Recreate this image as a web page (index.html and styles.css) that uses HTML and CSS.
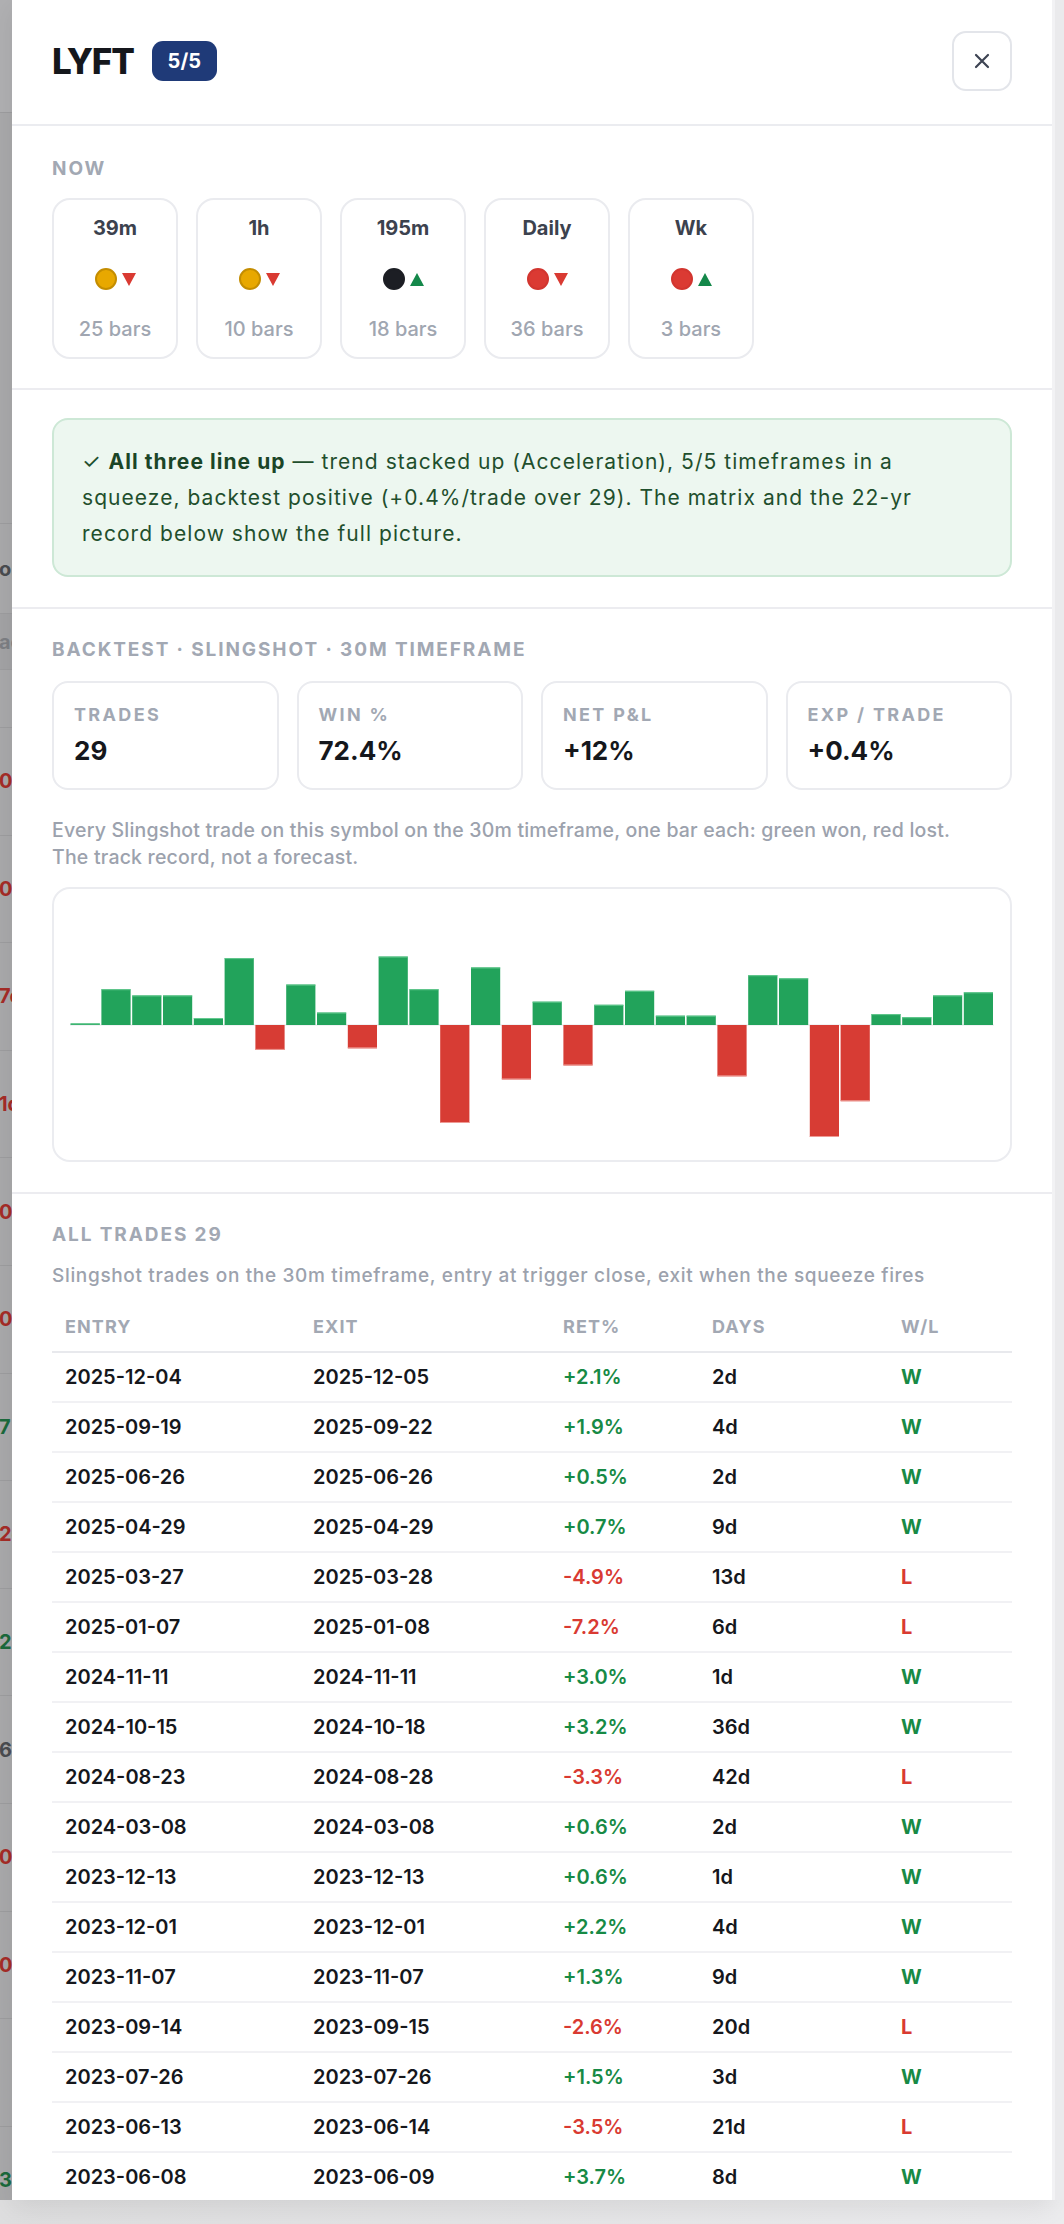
FILE: index.html
```html
<!DOCTYPE html>
<html lang="en">
<head>
  <meta charset="UTF-8" />
  <title>LYFT · Slingshot</title>
  <meta name="viewport" content="width=device-width, initial-scale=1.0" />
  <link rel="stylesheet" href="styles.css">
</head>
<body>
  <div class="screen">
    <!-- dimmed list page behind the modal -->
    <div class="backdrop">
      <div class="bd-top"></div>
      <div class="bd-gap"></div>
      <div class="bd-a"><span class="bd-dark">or</span></div>
      <div class="bd-b"><span class="bd-grey">ac</span></div>
      <div class="bd-c"></div>
      <div class="bd-row"><span class="bd-red">0d</span></div>
      <div class="bd-row"><span class="bd-red">0d</span></div>
      <div class="bd-row"><span class="bd-red">7d</span></div>
      <div class="bd-row"><span class="bd-red">1d</span></div>
      <div class="bd-row"><span class="bd-red">0d</span></div>
      <div class="bd-row"><span class="bd-red">0d</span></div>
      <div class="bd-row"><span class="bd-green">7 </span></div>
      <div class="bd-row"><span class="bd-red">2d</span></div>
      <div class="bd-row"><span class="bd-green">2 </span></div>
      <div class="bd-row"><span class="bd-dark">6 </span></div>
      <div class="bd-row"><span class="bd-red">0d</span></div>
      <div class="bd-row"><span class="bd-red">0d</span></div>
      <div class="bd-row"></div>
      <div class="bd-row"><span class="bd-green">3 </span></div>
    </div>

    <div class="panel">
      <div class="head">
        <div class="title">
          <h1>LYFT</h1>
          <span class="badge">5/5</span>
        </div>
        <button class="close" aria-label="Close">
          <svg width="16" height="16" viewBox="0 0 16 16">
            <path d="M2 2 L14 14 M14 2 L2 14" stroke="#3d4453" stroke-width="2.2" stroke-linecap="round" fill="none" />
          </svg>
        </button>
      </div>

      <div class="section section-now">
        <div class="label">Now</div>
        <div class="tf-row">
          <div class="tf">
            <div class="tf-name">39m</div>
            <div class="tf-sig"><span class="dot amber"></span><span class="tri down"></span></div>
            <div class="tf-bars">25 bars</div>
          </div>
          <div class="tf">
            <div class="tf-name">1h</div>
            <div class="tf-sig"><span class="dot amber"></span><span class="tri down"></span></div>
            <div class="tf-bars">10 bars</div>
          </div>
          <div class="tf">
            <div class="tf-name">195m</div>
            <div class="tf-sig"><span class="dot black"></span><span class="tri up"></span></div>
            <div class="tf-bars">18 bars</div>
          </div>
          <div class="tf">
            <div class="tf-name">Daily</div>
            <div class="tf-sig"><span class="dot red"></span><span class="tri down"></span></div>
            <div class="tf-bars">36 bars</div>
          </div>
          <div class="tf">
            <div class="tf-name">Wk</div>
            <div class="tf-sig"><span class="dot red"></span><span class="tri up"></span></div>
            <div class="tf-bars">3 bars</div>
          </div>
        </div>
      </div>

      <div class="section">
        <div class="callout">
          <span class="tick">✓</span> <strong>All three line up</strong> — trend stacked up (Acceleration), 5/5 timeframes in a squeeze, backtest positive (+0.4%/trade over 29). The matrix and the 22-yr record below show the full picture.
        </div>
      </div>

      <div class="section">
        <div class="label">Backtest · Slingshot · 30m timeframe</div>
        <div class="stats">
          <div class="stat">
            <div class="stat-label">Trades</div>
            <div class="stat-value">29</div>
          </div>
          <div class="stat">
            <div class="stat-label">Win %</div>
            <div class="stat-value">72.4%</div>
          </div>
          <div class="stat">
            <div class="stat-label">Net P&amp;L</div>
            <div class="stat-value">+12%</div>
          </div>
          <div class="stat">
            <div class="stat-label">Exp / trade</div>
            <div class="stat-value">+0.4%</div>
          </div>
        </div>
        <p class="note">Every Slingshot trade on this symbol on the 30m timeframe, one bar each: green won, red lost.<br>The track record, not a forecast.</p>
        <div class="chart">
          <svg id="bars" viewBox="0 0 924 224" preserveAspectRatio="none"></svg>
        </div>
      </div>

      <div class="section">
        <div class="label">All trades 29</div>
        <p class="sub">Slingshot trades on the 30m timeframe, entry at trigger close, exit when the squeeze fires</p>
        <table class="trades">
          <colgroup>
            <col class="c-entry"><col class="c-exit"><col class="c-ret"><col class="c-days"><col>
          </colgroup>
          <thead>
            <tr><th>Entry</th><th>Exit</th><th>Ret%</th><th>Days</th><th>W/L</th></tr>
          </thead>
          <tbody id="tradeRows"></tbody>
        </table>
      </div>
    </div>

    <div class="track"></div>
  </div>

  <script>
    // returns per trade, oldest first, in %
    const rets = [0.1, 2.3, 1.9, 1.9, 0.45, 4.3, -1.6, 2.6, 0.8, -1.5, 4.4, 2.3, -6.3, 3.7, -3.5,
                  1.5, -2.6, 1.3, 2.2, 0.6, 0.6, -3.3, 3.2, 3.0, -7.2, -4.9, 0.7, 0.5, 1.9, 2.1];

    const svg = document.getElementById('bars');
    const ns = 'http://www.w3.org/2000/svg';
    const W = 924, mid = 112, maxAbs = 7.2;
    const step = W / rets.length;

    function rect(x, y, w, h, fill) {
      const r = document.createElementNS(ns, 'rect');
      r.setAttribute('x', x);
      r.setAttribute('y', y);
      r.setAttribute('width', w);
      r.setAttribute('height', h);
      r.setAttribute('fill', fill);
      svg.appendChild(r);
    }

    rect(0, mid - 0.5, W, 1, '#e4e6ea');

    rets.forEach((r, i) => {
      const h = Math.max(Math.abs(r) / maxAbs * mid, 1.5);
      const x = i * step + 0.6;
      const w = step - 1.6;
      if (r >= 0) {
        rect(x, mid - h, w, h, '#22a35b');
        rect(x, mid - h, w, 1, '#63c98f');
      } else {
        rect(x, mid, w, h, '#d73c34');
        rect(x, mid + h - 1, w, 1, '#ee9a94');
      }
    });

    // most recent trades first
    const trades = [
      ['2025-12-04', '2025-12-05', 2.1, 2],
      ['2025-09-19', '2025-09-22', 1.9, 4],
      ['2025-06-26', '2025-06-26', 0.5, 2],
      ['2025-04-29', '2025-04-29', 0.7, 9],
      ['2025-03-27', '2025-03-28', -4.9, 13],
      ['2025-01-07', '2025-01-08', -7.2, 6],
      ['2024-11-11', '2024-11-11', 3.0, 1],
      ['2024-10-15', '2024-10-18', 3.2, 36],
      ['2024-08-23', '2024-08-28', -3.3, 42],
      ['2024-03-08', '2024-03-08', 0.6, 2],
      ['2023-12-13', '2023-12-13', 0.6, 1],
      ['2023-12-01', '2023-12-01', 2.2, 4],
      ['2023-11-07', '2023-11-07', 1.3, 9],
      ['2023-09-14', '2023-09-15', -2.6, 20],
      ['2023-07-26', '2023-07-26', 1.5, 3],
      ['2023-06-13', '2023-06-14', -3.5, 21],
      ['2023-06-08', '2023-06-09', 3.7, 8]
    ];

    const body = document.getElementById('tradeRows');
    trades.forEach(t => {
      const win = t[2] >= 0;
      const cls = win ? 'up' : 'down';
      const ret = (win ? '+' : '') + t[2].toFixed(1) + '%';
      const tr = document.createElement('tr');
      tr.innerHTML = `<td>${t[0]}</td><td>${t[1]}</td><td class="${cls}">${ret}</td><td>${t[3]}d</td><td class="${cls} wl">${win ? 'W' : 'L'}</td>`;
      body.appendChild(tr);
    });
  </script>
</body>
</html>
```

FILE: styles.css
```css
* {
  box-sizing: border-box;
}

html, body {
  margin: 0;
  padding: 0;
}

body {
  height: 2224px;
  overflow: hidden;
  background: linear-gradient(90deg, #dededf, #ececee);
  font-family: Inter, 'Noto Sans', Arial, sans-serif;
  color: #15171c;
}

.screen {
  display: flex;
  height: 2200px;
}

/* page behind the overlay */
.backdrop {
  width: 12px;
  flex-shrink: 0;
  background: #a9a9ab;
  overflow: hidden;
  font-size: 20px;
  font-weight: 700;
  white-space: nowrap;
}

.backdrop > div {
  display: flex;
  align-items: center;
  border-bottom: 1px solid #9d9d9f;
}

.bd-top {
  height: 113px;
  background: #b0b0b2;
}

.bd-gap { height: 411px; }
.bd-a { height: 90px; }
.bd-b { height: 56px; background: #a3a3a5; }
.bd-c { height: 58px; }
.bd-row { height: 107.6px; }

.backdrop span {
  margin-left: -1px;
}

.bd-red { color: #a52c27; }
.bd-green { color: #1b6a3c; }
.bd-dark { color: #4a4c50; }
.bd-grey { color: #7d7f84; }

.track {
  width: 12px;
  flex-shrink: 0;
  background: #eaeaec;
  border-left: 3px solid #f2f2f4;
}

.panel {
  flex: 1;
  background: #fff;
  overflow: hidden;
  box-shadow: 0 8px 24px rgba(0, 0, 0, 0.08);
}

/* header */
.head {
  display: flex;
  align-items: center;
  justify-content: space-between;
  padding: 31px 40px 33px;
  border-bottom: 2px solid #ebecf0;
}

.title {
  display: flex;
  align-items: center;
  gap: 18px;
}

.title h1 {
  margin: 0;
  font-size: 35px;
  font-weight: 800;
  line-height: 1.2;
  letter-spacing: -0.035em;
}

.badge {
  height: 40px;
  line-height: 40px;
  padding: 0 16px;
  border-radius: 11px;
  background: #1f3a78;
  color: #fff;
  font-size: 20px;
  font-weight: 700;
}

.close {
  width: 60px;
  height: 60px;
  display: flex;
  align-items: center;
  justify-content: center;
  padding: 0;
  background: #fff;
  border: 2px solid #e3e5ea;
  border-radius: 14px;
}

/* sections */
.section {
  padding: 28px 40px 30px;
  border-bottom: 2px solid #ececf0;
}

.section-now {
  padding: 30px 40px 29px;
}

.label {
  margin-bottom: 18px;
  font-size: 19px;
  font-weight: 700;
  line-height: 26px;
  letter-spacing: 0.1em;
  text-transform: uppercase;
  color: #a2a8b3;
}

.section-now .label {
  margin-bottom: 16px;
}

/* timeframe cards */
.tf-row {
  display: flex;
  gap: 18px;
}

.tf {
  width: 126px;
  display: flex;
  flex-direction: column;
  align-items: center;
  gap: 24px;
  padding: 14px 0;
  border: 2px solid #eaebef;
  border-radius: 18px;
}

.tf-name {
  font-size: 20px;
  font-weight: 700;
  line-height: 28px;
  color: #3c424e;
}

.tf-sig {
  height: 22px;
  margin-top: 2px;
  display: flex;
  align-items: center;
  gap: 5px;
}

.tf-bars {
  margin-top: 1px;
  font-size: 20px;
  font-weight: 500;
  line-height: 28px;
  color: #a0a6b1;
}

.dot {
  width: 22px;
  height: 22px;
  border-radius: 50%;
  border: 2px solid;
}

.dot.amber { background: #e8a800; border-color: #c48d00; }
.dot.black { background: #1c1e24; border-color: #1c1e24; }
.dot.red { background: #db3a33; border-color: #d2352f; }

.tri {
  width: 0;
  height: 0;
  border-left: 7px solid transparent;
  border-right: 7px solid transparent;
}

.tri.down { border-top: 13px solid #d93a32; }
.tri.up { border-bottom: 13px solid #14884a; }

/* verdict */
.callout {
  padding: 24px 60px 23px 28px;
  background: #edf7f0;
  border: 2px solid #cde8d6;
  border-radius: 16px;
  font-size: 21px;
  line-height: 36px;
  letter-spacing: 0.05em;
  color: #1f4f2d;
}

.callout strong {
  font-weight: 700;
  color: #1a4527;
}

.callout .tick {
  font-weight: 400;
}

/* backtest stats */
.stats {
  display: grid;
  grid-template-columns: repeat(4, 1fr);
  gap: 18px;
}

.stat {
  padding: 20px;
  border: 2px solid #eaebef;
  border-radius: 16px;
}

.stat-label {
  font-size: 18px;
  font-weight: 700;
  line-height: 24px;
  letter-spacing: 0.13em;
  text-transform: uppercase;
  color: #a2a8b3;
}

.stat-value {
  margin-top: 7px;
  font-size: 26px;
  font-weight: 700;
  line-height: 34px;
}

.note {
  margin: 27px 0 16px;
  font-size: 19.5px;
  font-weight: 500;
  line-height: 27px;
  letter-spacing: 0.01em;
  color: #9ca2ad;
}

.chart {
  padding: 24px 16px 23px;
  border: 2px solid #ebecf0;
  border-radius: 18px;
}

.chart svg {
  display: block;
  width: 100%;
  height: 224px;
}

/* trade list */
.sub {
  margin: -4px 0 13px;
  font-size: 19px;
  font-weight: 500;
  line-height: 28px;
  letter-spacing: 0.035em;
  color: #9ca2ad;
}

.trades {
  width: 100%;
  border-collapse: collapse;
  table-layout: fixed;
}

.c-entry { width: 248px; }
.c-exit { width: 250px; }
.c-ret { width: 149px; }
.c-days { width: 189px; }

.trades th {
  padding: 12px 13px;
  text-align: left;
  font-size: 18px;
  font-weight: 700;
  line-height: 24px;
  letter-spacing: 0.06em;
  text-transform: uppercase;
  color: #a2a8b3;
  border-bottom: 2px solid #e8e9ed;
}

.trades td {
  padding: 12px 13px;
  font-size: 20px;
  font-weight: 600;
  line-height: 24px;
  border-bottom: 2px solid #f1f1f4;
}

.trades .up { color: #178a45; }
.trades .down { color: #d93a32; }
.trades .wl { font-weight: 700; }
```
